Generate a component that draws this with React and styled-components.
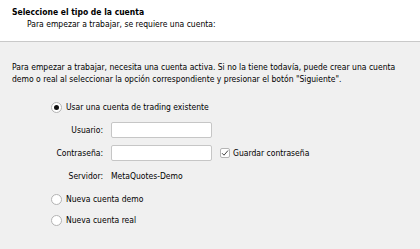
import React from "react";
import styled, { createGlobalStyle } from "styled-components";

const Global = createGlobalStyle`
  html, body { margin: 0; padding: 0; }
  body {
    width: 420px; height: 249px; overflow: hidden;
    background: #f0f0f0;
    font-family: "DejaVu Sans Condensed", "DejaVu Sans", sans-serif;
    font-size: 8.5px;
    color: #000;
  }
`;

const Page = styled.div`
  width: 420px;
  height: 249px;
  display: flex;
  flex-direction: column;
`;

const Header = styled.div`
  height: 42px;
  box-sizing: border-box;
  background: #fff;
  border-bottom: 1px solid #c9c9c9;
  padding: 6px 0 0 12px;
  display: flex;
  flex-direction: column;
`;

const Title = styled.div`
  font-weight: bold;
  line-height: 12px;
`;

const Subtitle = styled.div`
  line-height: 12px;
  padding-left: 15px;
`;

const Body = styled.div`
  flex: 1;
  padding: 19px 12px 0 12px;
  display: flex;
  flex-direction: column;
`;

const Paragraph = styled.p`
  margin: 0;
  line-height: 12px;
  white-space: nowrap;
`;

const Options = styled.div`
  display: flex;
  flex-direction: column;
  padding-left: 39px;
  margin-top: 16px;
`;

const RadioRow = styled.label`
  display: flex;
  align-items: center;
  gap: 4px;
  height: 12px;
  margin-top: ${(p) => p.$mt || 0}px;
`;

const RadioDot = styled.span`
  width: 9px;
  height: 9px;
  border-radius: 50%;
  border: 1px solid #b3b3b3;
  background: #fff;
  display: flex;
  align-items: center;
  justify-content: center;
  &::after {
    content: "";
    width: 5px;
    height: 5px;
    border-radius: 50%;
    background: #111;
    display: ${(p) => (p.$checked ? "block" : "none")};
  }
`;

const Form = styled.div`
  display: grid;
  grid-template-columns: 50px 101px auto;
  grid-auto-rows: 16px;
  column-gap: 8px;
  row-gap: 7px;
  margin-top: 9px;
  margin-left: 2px;
  align-items: center;
`;

const Label = styled.span`
  text-align: right;
  white-space: nowrap;
`;

const Input = styled.div`
  height: 16px;
  box-sizing: border-box;
  border: 1px solid #c6c6c6;
  border-radius: 2px;
  background: #fff;
`;

const CheckRow = styled.span`
  display: flex;
  align-items: center;
  gap: 3px;
`;

const Box = styled.span`
  width: 10px;
  height: 10px;
  box-sizing: border-box;
  border: 1px solid #b5b5b5;
  border-radius: 2px;
  background: #fff;
  display: flex;
  align-items: center;
  justify-content: center;
`;

const Value = styled.span`
  white-space: nowrap;
`;

export default function App() {
  return (
    <>
      <Global />
      <Page>
        <Header>
          <Title>Seleccione el tipo de la cuenta</Title>
          <Subtitle>Para empezar a trabajar, se requiere una cuenta:</Subtitle>
        </Header>
        <Body>
          <Paragraph>
            Para empezar a trabajar, necesita una cuenta activa. Si no la tiene todavía, puede crear una cuenta
            <br />
            demo o real al seleccionar la opción correspondiente y presionar el botón "Siguiente".
          </Paragraph>
          <Options>
            <RadioRow>
              <RadioDot $checked />
              Usar una cuenta de trading existente
            </RadioRow>
            <Form>
              <Label>Usuario:</Label>
              <Input />
              <span />
              <Label>Contraseña:</Label>
              <Input />
              <CheckRow>
                <Box>
                  <svg width="8" height="8" viewBox="0 0 8 8">
                    <path d="M1 4.2 L3 6.2 L7 1.5" fill="none" stroke="#444" strokeWidth="1" />
                  </svg>
                </Box>
                Guardar contraseña
              </CheckRow>
              <Label>Servidor:</Label>
              <Value>MetaQuotes-Demo</Value>
              <span />
            </Form>
            <RadioRow $mt={9}>
              <RadioDot />
              Nueva cuenta demo
            </RadioRow>
            <RadioRow $mt={9}>
              <RadioDot />
              Nueva cuenta real
            </RadioRow>
          </Options>
        </Body>
      </Page>
    </>
  );
}
